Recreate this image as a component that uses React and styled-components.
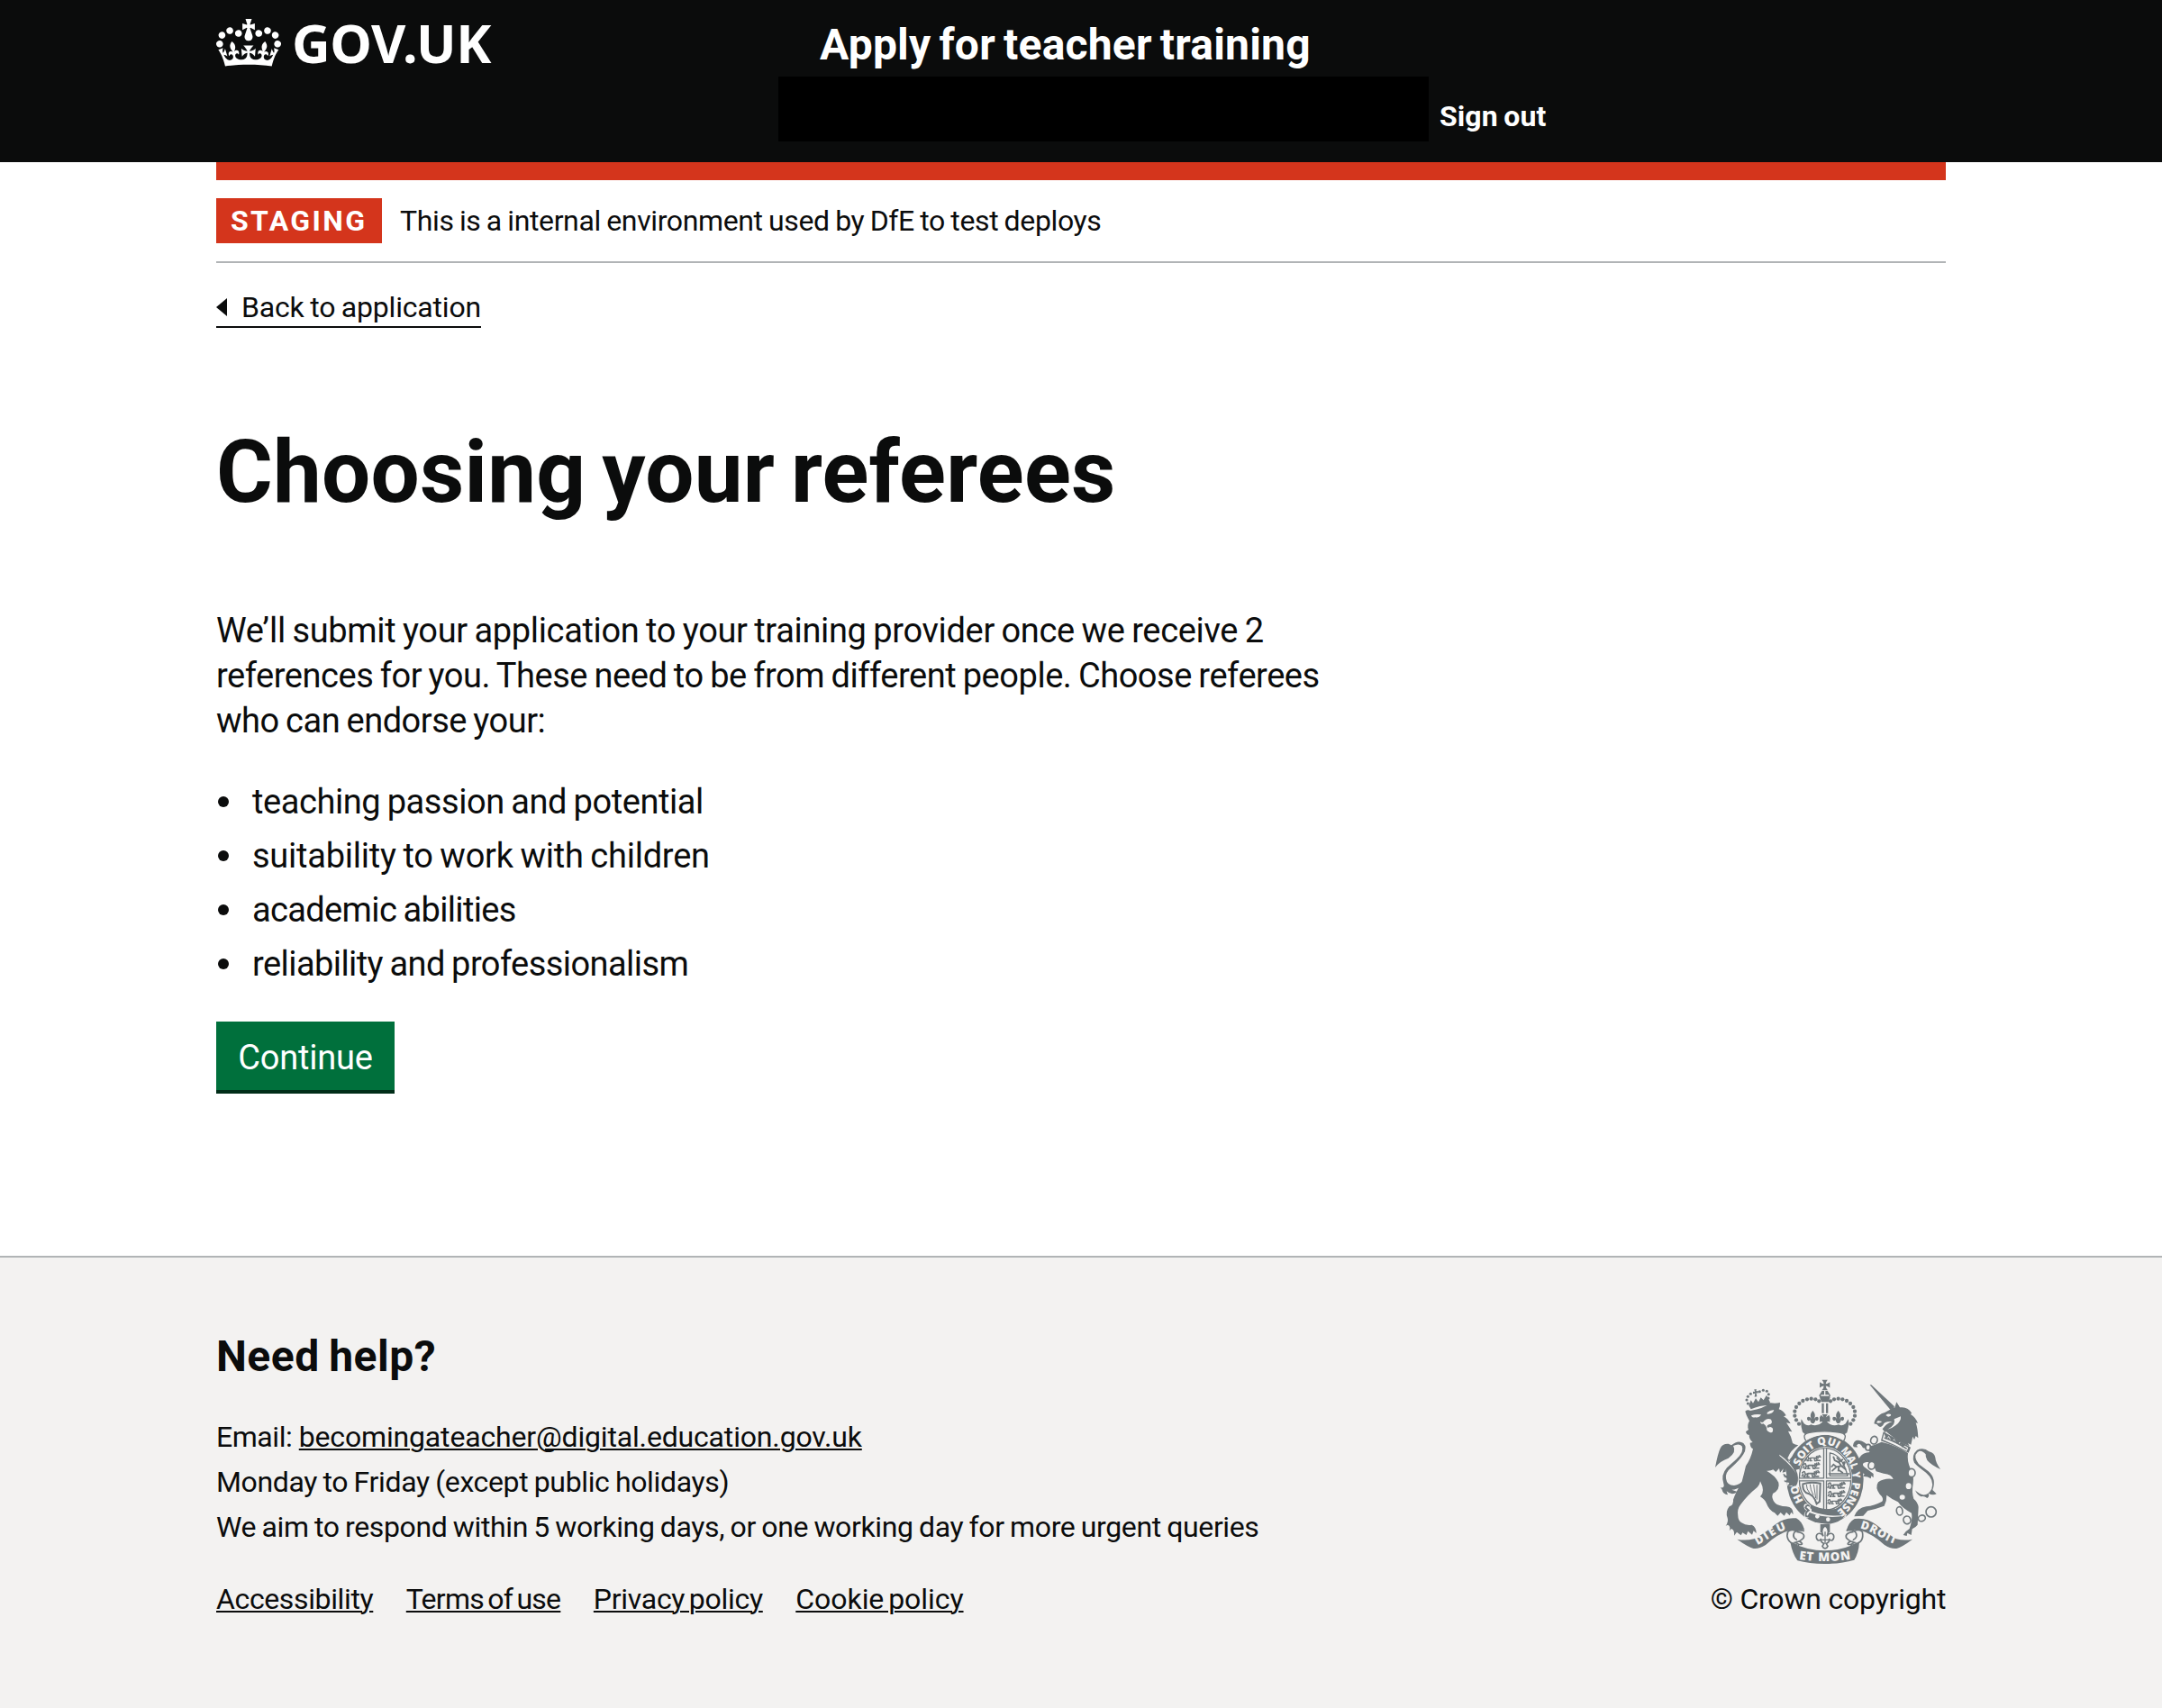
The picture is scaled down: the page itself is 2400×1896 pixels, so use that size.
import React from "react";
import styled, { createGlobalStyle } from "styled-components";

const INK = "#0b0c0c";
const RED = "#d4351c";
const RULE = "#b1b4b6";
const PALE = "#f3f2f1";
const CREST = "#6f777b";

const GlobalStyle = createGlobalStyle`
  *, *::before, *::after { box-sizing: border-box; }
  body {
    margin: 0;
    background: #fff;
    color: ${INK};
    font-family: Roboto, "Liberation Sans", sans-serif;
    -webkit-font-smoothing: antialiased;
  }
`;

const Page = styled.div`
  display: flex;
  flex-direction: column;
  min-height: 1896px;
`;

const Container = styled.div`
  width: 1920px;
  margin: 0 auto;
`;

/* Text run with its own letter and word spacing */
const Run = styled.span`
  letter-spacing: ${(p) => p.$track || 0}px;
  word-spacing: ${(p) => p.$word || 0}px;
  white-space: nowrap;
`;

const Header = styled.header`
  background: ${INK};
  height: 180px;
`;

const HeaderInner = styled(Container)`
  display: flex;
`;

const LogoLink = styled.a`
  display: flex;
  align-items: flex-start;
  width: 624px;
  padding-top: 21px;
  color: #fff;
  text-decoration: none;
`;

const CrownIcon = styled.svg`
  display: block;
  width: 72px;
  height: 53px;
  fill: #fff;
`;

const LogoText = styled.span`
  margin: -4px 0 0 12px;
  font-family: "Noto Sans", "Open Sans", sans-serif;
  font-weight: 700;
  font-size: 59px;
  line-height: 60px;
  letter-spacing: -0.4px;
`;

const HeaderContent = styled.div`
  padding-top: 20px;
  color: #fff;
  font-weight: 700;
`;

const ServiceName = styled.div`
  padding-left: 46px;
  font-size: 48px;
  line-height: 60px;
`;

const AccountRow = styled.div`
  display: flex;
  gap: 12px;
  margin-top: 5px;
`;

const AccountName = styled.div`
  width: 722px;
  height: 72px;
  background: #000;
`;

const SignOut = styled.a`
  padding-top: 19px;
  color: #fff;
  font-size: 32px;
  line-height: 50px;
`;

const RedBar = styled.div`
  height: 20px;
  background: ${RED};
`;

const PhaseBanner = styled.div`
  display: flex;
  gap: 20px;
  padding: 20px 0;
  border-bottom: 2px solid ${RULE};
  font-size: 32px;
  line-height: 50px;
`;

const PhaseTag = styled.strong`
  width: 184px;
  padding-left: 16px;
  background: ${RED};
  color: #fff;
  font-weight: 700;
`;

const BackLink = styled.a`
  display: flex;
  align-items: center;
  gap: 16px;
  width: 294px;
  margin-top: 29px;
  padding-bottom: 1px;
  border-bottom: 2px solid ${INK};
  font-size: 32px;
  line-height: 40px;
`;

const BackArrow = styled.span`
  border: solid transparent;
  border-width: 10px 12px 10px 0;
  border-right-color: ${INK};
`;

const Main = styled.main`
  padding: 110px 0 180px;
`;

const Title = styled.h1`
  margin: 0;
  font-size: 96px;
  line-height: 100px;
  font-weight: 700;
`;

const Lead = styled.p`
  display: flex;
  flex-direction: column;
  margin: 101px 0 40px;
  font-size: 38px;
  line-height: 50px;
`;

const List = styled.ul`
  display: flex;
  flex-direction: column;
  gap: 10px;
  margin: 0 0 39px;
  padding: 0;
  list-style: none;
  font-size: 38px;
  line-height: 50px;
`;

const Item = styled.li`
  display: flex;
  align-items: center;
  gap: 26px;
  padding-left: 2px;
  &::before {
    content: "";
    width: 12px;
    height: 12px;
    border-radius: 50%;
    background: ${INK};
  }
`;

const Button = styled.button`
  display: block;
  width: 198px;
  height: 76px;
  padding: 21px 0 17px;
  border: 0;
  background: #00703c;
  box-shadow: 0 4px 0 #002d18;
  color: #fff;
  font: 400 38px/38px Roboto, "Liberation Sans", sans-serif;
  text-align: center;
  margin-bottom: 4px;
`;

const Footer = styled.footer`
  flex: 1;
  border-top: 2px solid ${RULE};
  background: ${PALE};
`;

const FooterInner = styled(Container)`
  display: flex;
  justify-content: space-between;
  align-items: flex-end;
  padding-top: 80px;
`;

const HelpTitle = styled.h2`
  margin: 0 0 34px;
  font-size: 48px;
  line-height: 60px;
  font-weight: 700;
`;

const HelpLines = styled.div`
  display: flex;
  flex-direction: column;
  font-size: 32px;
  line-height: 50px;
`;

const TextLink = styled.a`
  color: ${INK};
  letter-spacing: ${(p) => p.$track || 0}px;
  word-spacing: -3px;
  text-decoration: underline;
  text-decoration-thickness: 2px;
  text-underline-offset: 2px;
  white-space: nowrap;
`;

const FooterLinks = styled.nav`
  display: flex;
  gap: 36.5px;
  margin-top: 30px;
  font-size: 32px;
  line-height: 50px;
`;

const Copyright = styled.div`
  display: flex;
  flex-direction: column;
  align-items: center;
  width: 261px;
  font-size: 32px;
  line-height: 50px;
`;

const CrestArt = styled.svg`
  display: block;
  width: 252px;
  height: 206px;
  margin: 0 1px 13px 0;
`;

function Crown() {
  return (
    <CrownIcon viewBox="0 0 132 97" preserveAspectRatio="none" aria-hidden="true">
      <path d="M25 30.2c3.5 1.5 7.7-.2 9.1-3.7 1.5-3.6-.2-7.8-3.9-9.2-3.6-1.4-7.6.3-9.1 3.9-1.4 3.5.3 7.5 3.9 9zM9 39.5c3.6 1.5 7.8-.2 9.2-3.7 1.5-3.6-.2-7.8-3.9-9.1-3.6-1.5-7.6.2-9.1 3.8-1.4 3.5.3 7.5 3.8 9zM4.4 57.2c3.5 1.5 7.7-.2 9.1-3.8 1.5-3.6-.2-7.7-3.9-9.1-3.5-1.5-7.6.3-9.1 3.8-1.4 3.5.3 7.6 3.9 9.1zm38.3-21.4c3.5 1.5 7.7-.2 9.1-3.8 1.5-3.6-.2-7.7-3.9-9.1-3.6-1.5-7.6.3-9.1 3.8-1.3 3.6.4 7.7 3.9 9.1zm64.4-5.6c-3.6 1.5-7.8-.2-9.1-3.7-1.5-3.6.2-7.8 3.8-9.2 3.6-1.4 7.7.3 9.2 3.9 1.3 3.5-.4 7.5-3.9 9zm15.9 9.3c-3.6 1.5-7.7-.2-9.1-3.7-1.5-3.6.2-7.8 3.7-9.1 3.6-1.5 7.7.2 9.2 3.8 1.5 3.5-.3 7.5-3.8 9zm4.7 17.7c-3.6 1.5-7.8-.2-9.2-3.8-1.5-3.6.2-7.7 3.9-9.1 3.6-1.5 7.7.3 9.2 3.8 1.3 3.5-.4 7.6-3.9 9.1zM89.3 35.8c-3.6 1.5-7.8-.2-9.2-3.8-1.4-3.6.2-7.7 3.9-9.1 3.6-1.5 7.7.3 9.2 3.8 1.4 3.6-.3 7.7-3.9 9.1zM69.7 17.7l8.9 4.7V9.3l-8.9 2.8c-.2-.3-.5-.6-.9-.9L72.4 0H59.6l3.5 11.2c-.3.3-.6.5-.9.9l-8.8-2.8v13.1l8.8-4.7c.3.3.6.7.9.9l-5 15.4v.1c-.2.8-.4 1.6-.4 2.4 0 4.1 3.1 7.5 7 8.1h.2c.3 0 .7.1 1 .1.4 0 .7 0 1-.1h.2c4-.6 7.1-4.1 7.1-8.1 0-.8-.1-1.7-.4-2.4V34l-5.1-15.4c.4-.2.7-.6 1-.9zM66 92.8c16.9 0 32.8 1.1 47.1 3.2 4-16.9 8.9-26.7 14-33.5l-9.6-3.4c1 4.9 1.1 7.2 0 10.2-1.5-1.4-3-4.3-4.2-8.7L108.6 76c2.8-2 5-3.2 7.5-3.3-4.4 9.4-10 11.9-13.6 11.2-4.3-.8-6.3-4.6-5.6-7.9 1-4.7 5.7-5.9 8-.5 4.3-8.7-3-11.4-7.6-8.8 7.1-7.2 7.9-13.5 2.1-21.1-8 6.1-8.1 12.3-4.5 20.8-4.7-5.4-12.1-2.5-9.5 6.2 3.4-5.2 7.9-2 7.2 3.1-.6 4.3-6.4 7.8-13.5 7.2-10.3-.9-10.9-8-11.2-13.8 2.5-.5 7.1 1.8 11 7.3L80.2 60c-4.1 4.4-8 5.3-12.3 5.4 1.4-4.4 8-11.6 8-11.6H55.5s6.4 7.2 7.9 11.6c-4.2-.1-8-1-12.3-5.4l1.4 16.4c3.9-5.5 8.5-7.7 10.9-7.3-.3 5.8-.9 12.8-11.1 13.8-7.2.6-12.9-2.9-13.5-7.2-.7-5 3.8-8.3 7.1-3.1 2.7-8.7-4.6-11.6-9.4-6.2 3.7-8.5 3.6-14.7-4.6-20.8-5.8 7.6-5 13.9 2.2 21.1-4.7-2.6-11.9.1-7.7 8.8 2.3-5.5 7.1-4.2 8.1.5.7 3.3-1.3 7.1-5.7 7.9-3.5.7-9-1.8-13.5-11.2 2.5.1 4.7 1.3 7.5 3.3l-4.7-15.4c-1.2 4.4-2.7 7.2-4.3 8.7-1.1-3-.9-5.3 0-10.2l-9.5 3.4c5 6.9 9.9 16.7 14 33.5 14.8-2.1 30.8-3.2 47.7-3.2z" />
    </CrownIcon>
  );
}

const crownPearls = [
  [351, 212], [342, 199], [337, 185], [337, 170], [342, 156], [352, 144], [364, 135],
  [378, 130], [392, 128], [406, 130], [418, 136],
];
const helmPearls = [
  [181, 144], [177, 132], [181, 121], [190, 112], [220, 104], [232, 100], [244, 103], [250, 113], [249, 126],
];
const chainLinks = [
  [601, 266, 11, 13, 20], [581, 290, 8, 10, 10], [593, 350, 11, 13, 10], [726, 375, 12, 14, 0],
  [686, 502, 10, 14, -10], [711, 532, 12, 13, -20], [760, 526, 12, 10, -20], [791, 505, 17, 17, 0],
];
const garterWords = [
  ["HO", 88, 58],
  ["SOIT", 208, 84],
  ["QUI", 302, 68],
  ["MAL", 381, 74],
  ["Y", 463, 21],
  ["PENSE", 496, 114],
];

function Fleur({ x, y, s = 1 }) {
  return (
    <path
      transform={`translate(${x} ${y}) scale(${s})`}
      d="M0-20C9-10 9-2 4 8C10-2 20-2 19 8C18 14 12 15 9 11C9 18 5 18 4 22H-4C-5 18-9 18-9 11C-12 15-18 14-19 8C-20-2-10-2-4 8C-9-2-9-10 0-20Z"
    />
  );
}

function CrossPattee({ x, y, s = 1 }) {
  return (
    <path
      transform={`translate(${x} ${y}) scale(${s})`}
      d="M-9-16H9Q3-9 3-3Q9-3 16-9V9Q9 3 3 3Q3 9 9 16H-9Q-3 9-3 3Q-9 3-16 9V-9Q-9-3-3-3Q-3-9-9-16Z"
    />
  );
}

function SmallLion({ x, y, s = 1 }) {
  return (
    <path
      transform={`translate(${x} ${y}) scale(${s})`}
      fill="none"
      stroke={CREST}
      strokeWidth="4.5"
      strokeLinecap="round"
      strokeLinejoin="round"
      d="M-27-3Q-20-11-19-2Q-18 4-10-1H8M10-6V3M15-8V1M10-4H22M8 1L14 8H22M2 0L4 9H10M-10 0L-13 9H-7M-17 2L-23 9H-18M20-9L24-4M-25 2L-28 7"
    />
  );
}

function RoyalCrest() {
  return (
    <CrestArt viewBox="69 63 756 618" role="img" aria-label="Royal coat of arms">
      <defs>
        <path id="garter" d="M438 515A101 118 0 0 1 438 280A101 118 0 0 1 438 515" />
        <path id="scrollLeft" d="M211 616C243 602 272 573 317 560" />
        <path id="scrollRight" d="M552 559C594 566 631 600 674 614" />
        <path id="scrollMid" d="M350 663Q437 676 526 662" />
        <clipPath id="shield"><ellipse cx="438" cy="396" rx="86" ry="103" /></clipPath>
      </defs>

      {/* Lion */}
      <g fill={CREST}>
        {helmPearls.map(([x, y]) => <circle key={`${x}-${y}`} cx={x} cy={y} r="4.6" />)}
        <path d="M184 151L191 133L198 143L207 127L216 139L224 124L233 133L243 116L255 140L252 149Q220 150 191 163Z" />
        <path d="M202 97H210L208 103L215 102V110L209 108L211 121L203 122L205 110L198 112V104L204 105Z" />
        <path d="M172 170Q180 163 189 168Q234 161 256 142Q273 145 288 141Q289 152 284 163Q299 168 308 184L300 187Q315 195 323 211L309 208Q320 225 328 238L315 236Q325 252 330 276Q338 281 349 283Q323 300 313 326Q329 341 340 367Q347 386 347 407Q338 423 327 424L329 414Q320 421 311 417L318 407Q308 410 301 402L311 394Q301 392 298 377L308 382L311 370L296 374L299 361L288 374L285 360L274 372L265 364Q257 369 243 368Q271 383 283 407Q289 430 264 444Q258 459 271 475Q282 486 309 487Q333 488 332 514L325 506L320 517L309 506L302 518L290 507L280 518L270 508Q251 500 242 475Q238 465 222 454Q240 438 222 403Q219 420 205 429Q181 448 157 480Q144 496 148 518Q148 533 160 541Q174 551 194 548Q209 555 209 576L200 568L195 581L181 569L176 582L163 574L158 583L144 572L135 584Q137 565 126 561L119 568Q125 553 114 548L107 551Q117 539 113 525Q105 504 119 487Q134 482 132 464Q140 440 160 407Q168 379 174 352Q191 328 198 295Q188 290 188 275L197 273Q184 263 185 247L194 248Q176 252 174 238L183 231Q177 218 186 202L181 193Q176 184 172 170Z" />
        <path d="M72 357Q81 309 89 293Q96 277 116 278L126 283Q148 264 166 276Q180 290 166 313Q153 334 127 356Q104 374 108 394Q111 417 135 417Q155 414 167 398L158 419Q146 430 127 431L146 438Q127 452 110 436L114 448Q98 446 94 429L89 424Q105 426 100 411Q90 382 111 358L142 330Q170 304 161 286Q151 275 132 285Q145 306 116 326Q87 336 72 357Z" />
      </g>
      <g fill={PALE}>
        <path d="M192 184Q207 178 225 181Q218 193 205 190Q194 193 192 184ZM245 174Q257 164 268 166Q263 180 245 179Z" />
        <path d="M222 204Q230 211 236 201Q246 191 258 197Q266 211 251 214Q240 219 248 225Q257 218 264 227Q266 244 254 240Q241 235 244 225Q239 215 232 211Q223 215 222 204Z" />
      </g>

      {/* Garter and shield */}
      <ellipse cx="438" cy="396" rx="133" ry="152" fill={PALE} />
      <path d="M345 315Q329 312 313 341L325 331Z" fill={CREST} />
      <ellipse cx="438" cy="396" rx="128" ry="148" fill={CREST} />
      <path d="M309 374L351 362L351 424L313 418Z" fill={PALE} />
      <path d="M302 330Q340 348 346 378Q352 405 340 421L326 429L329 416L313 420L319 408L303 405L312 396L299 382L310 384Z" fill={CREST} />
      <path d="M286 314Q325 340 343 380Q328 352 286 318Z" fill={PALE} />
      <path d="M392 483Q379 474 369 480Q363 493 376 501Q364 510 370 523Q382 531 389 519Q461 545 506 522L511 512Q466 527 393 503Z" fill={PALE} />
      <path d="M386 507Q444 530 506 517Q483 544 448 545Q412 543 379 521Z" fill={CREST} />
      <path d="M389 486Q376 478 373 491L383 500Q372 506 374 518Q384 525 388 511" fill="none" stroke={CREST} strokeWidth="6" />
      <circle cx="412" cy="520" r="7" fill={PALE} />
      <circle cx="448" cy="530" r="7" fill={PALE} />
      <g fill={PALE} fontFamily='"Open Sans", sans-serif' fontWeight="800" fontSize="36">
        {garterWords.map(([word, start, length]) => (
          <text key={word}>
            <textPath href="#garter" startOffset={start} textLength={length} lengthAdjust="spacingAndGlyphs">{word}</textPath>
          </text>
        ))}
      </g>
      <ellipse cx="438" cy="396" rx="90" ry="107" fill={PALE} />
      <ellipse cx="438" cy="396" rx="86" ry="103" fill="none" stroke={CREST} strokeWidth="4" />
      <g clipPath="url(#shield)">
        <path d="M438 290V500M345 397H530" stroke={CREST} strokeWidth="13" />
        <path d="M438 290V500M345 397H530" stroke={PALE} strokeWidth="5" />
        <SmallLion x={400} y={326} s={0.95} />
        <SmallLion x={394} y={351} s={1.05} />
        <SmallLion x={392} y={378} s={1.1} />
        <SmallLion x={478} y={416} s={1.1} />
        <SmallLion x={478} y={444} s={1.05} />
        <SmallLion x={472} y={470} s={0.9} />
        <path d="M454 385V309Q495 314 513 385ZM449 378H520" fill="none" stroke={CREST} strokeWidth="4" />
        <path d="M462 368L476 355L466 347L460 354M476 355L492 352L506 363M492 352L484 340L470 333L466 322M484 340L496 331M478 325L486 334M484 366L496 374M484 354L482 368M499 350Q509 334 498 342" fill="none" stroke={CREST} strokeWidth="5.5" strokeLinecap="round" />
        <path d="M364 412Q388 403 422 410L420 470L410 478Q400 446 376 442Q362 432 364 412Z" fill="none" stroke={CREST} strokeWidth="6" />
        <path d="M376 414Q376 430 386 441M388 413Q389 432 399 449M400 413L407 459M411 415V464" fill="none" stroke={CREST} strokeWidth="3" />
      </g>
      <path d="M391 481Q429 501 479 494L468 506Q424 511 388 493Z" fill={CREST} />

      {/* Unicorn */}
      <g fill={CREST}>
        <path d="M587 82L592 82L669 154L655 164Q620 123 587 82Z" />
        <path d="M652 166L666 153L669 160L676 139L687 157Q714 153 727 177L722 179Q741 191 747 210L740 208Q747 228 748 259L740 252L735 265L730 254L724 281L714 276L719 286Q684 273 649 244L640 236L639 242L629 229Q642 210 662 204Q634 202 631 216Q620 229 611 214L601 211Q604 190 626 178Q639 174 652 166Z" />
        <path d="M626 272Q671 282 714 309Q710 335 723 363Q735 381 731 411Q726 438 733 461Q747 473 749 489L746 548Q739 557 728 562L725 582L712 575L710 585L698 582Q708 567 719 561Q730 529 726 509Q694 492 681 472Q658 461 643 449Q644 466 635 485Q608 495 580 501L565 518L535 520Q545 492 575 487Q602 484 628 470Q635 459 620 446Q603 424 615 406Q637 391 665 396Q661 380 633 377L608 370Q597 336 576 339Q557 342 567 354L599 378V391L592 385L590 394Q579 386 565 387L569 379Q549 370 547 354Q544 333 555 321Q564 307 587 306Q580 294 564 292Q552 270 543 284L547 289Q532 292 531 284Q534 264 552 267Q570 270 583 287Q607 281 626 272Z" />
        <path d="M738 433Q772 466 793 428Q803 399 774 374Q744 352 735 341Q724 317 744 299Q766 288 784 304Q803 309 805 324Q806 340 822 363Q812 359 795 348Q771 333 773 313Q758 296 746 306Q730 320 750 346L782 370Q810 395 796 432L809 445Q796 451 782 443Q787 452 778 459Q768 451 758 454Q745 449 738 433Z" />
      </g>
      <path d="M632 238Q680 264 723 290L716 308Q670 284 624 268Z" fill={CREST} />
      <path d="M635 244L641 263L650 252L661 270L668 262L678 279L688 272L694 290L703 284L715 291L710 302Q668 280 629 264Z" fill={PALE} />
      <path d="M635 258Q674 271 710 295M649 265L650 257M667 273L669 266M687 282L690 275" fill="none" stroke={CREST} strokeWidth="5" />
      <path d="M640 183Q648 176 657 180Q659 187 648 188ZM609 208Q620 211 628 204L614 201ZM668 196L690 187Q692 203 674 216Q661 227 646 230Q675 216 668 196Z" fill={PALE} />
      {chainLinks.map(([x, y, rx, ry, a]) => (
        <ellipse key={`${x}-${y}`} cx={x} cy={y} rx={rx} ry={ry} transform={`rotate(${a} ${x} ${y})`} fill={PALE} stroke={CREST} strokeWidth="5" />
      ))}
      <ellipse cx="716" cy="419" rx="9" ry="10" fill={PALE} />
      <ellipse cx="695" cy="456" rx="9" ry="8" fill={PALE} />

      {/* Crown above the shield */}
      <g fill={CREST}>
        <CrossPattee x={437} y={82} s={1.05} />
        <path d="M428 101H446L456 117L453 124H421L418 117Z" />
        {crownPearls.map(([x, y]) => <circle key={`l${x}-${y}`} cx={x} cy={y} r="6.4" />)}
        {crownPearls.map(([x, y]) => <circle key={`r${x}-${y}`} cx={874 - x} cy={y} r="6.4" />)}
        <path d="M420 124Q437 119 455 124L449 139H426Z" />
        <path d="M427 143H434V176H427ZM441 143H448V176H441Z" />
        <path d="M359 196L368 211Q380 221 391 214Q413 222 430 205Q413 204 424 182L437 193L451 182Q460 204 444 205Q461 222 483 214Q494 221 506 211L515 196Q520 211 511 241L500 248Q437 230 374 248L363 239Q355 213 359 196Z" />
        <Fleur x={397} y={188} s={1} />
        <Fleur x={482} y={188} s={1} />
        <CrossPattee x={437} y={197} s={1.05} />
      </g>
      <path d="M424 117H451M437 102V116" stroke={PALE} strokeWidth="4" />
      <path d="M374 268Q360 245 385 241Q437 232 489 241Q514 245 500 268Q437 228 374 268Z" fill={PALE} />
      <path d="M374 268Q360 245 385 241Q437 232 489 241Q514 245 500 268" fill="none" stroke={CREST} strokeWidth="4" />

      {/* Motto scroll */}
      <g fill={CREST}>
        <path d="M145 596Q172 602 201 595Q240 574 270 548Q302 522 342 526Q360 535 369 563L354 568Q333 568 325 565Q279 578 240 615Q218 629 200 627Q180 621 145 596Z" />
        <path d="M729 596Q702 602 675 595Q640 574 610 549Q576 522 536 528Q518 537 509 566L522 569Q540 565 552 565Q595 578 636 615Q656 629 676 627Q696 621 729 596Z" />
        <path d="M322 605Q380 634 437 634Q494 634 552 605Q550 642 535 665Q490 678 437 678Q384 678 346 667Q329 644 322 605Z" />
        <path d="M422 546H454V573H422Z" />
      </g>
      <g fill={PALE} stroke={CREST} strokeWidth="5">
        <path d="M369 568C357 565 341 566 335 574C327 591 340 596 354 604Q375 617 337 612C314 607 308 587 314 571Q325 560 343 570" />
        <path d="M509 568C519 563 536 566 541 575C548 591 535 597 521 604Q500 617 538 612C560 607 566 590 562 571Q552 560 533 570" />
        <path d="M343 571Q374 575 366 592Q357 603 338 607Q356 613 346 619" />
        <path d="M533 571Q502 575 509 592Q518 603 536 607Q519 613 528 619" />
      </g>
      <path d="M438 551C450 560 451 572 444 586C449 573 469 573 467 590C465 603 454 602 451 594C455 606 446 607 442 611L447 619C443 629 433 629 429 619L434 611C430 607 421 606 425 594C422 602 411 603 409 590C407 573 427 573 432 586C425 572 426 560 438 551Z" fill={PALE} stroke={CREST} strokeWidth="5" />
      <path d="M427 598H450M438 571V611" stroke={CREST} strokeWidth="4" />
      <g fill={PALE} fontFamily='"Open Sans", sans-serif' fontWeight="800" fontSize="38">
        <text><textPath href="#scrollLeft" startOffset="2" textLength="110">DIEU</textPath></text>
        <text><textPath href="#scrollRight" startOffset="2" textLength="128">DROIT</textPath></text>
        <text fontSize="40"><textPath href="#scrollMid" startOffset="1" textLength="173">ET MON</textPath></text>
      </g>
    </CrestArt>
  );
}

const leadLines = [
  ["We’ll submit your application to your training provider once we receive 2", -0.33],
  ["references for you. These need to be from different people. Choose referees", -0.46],
  ["who can endorse your:", -0.5],
];
const qualities = [
  ["teaching passion and potential", -0.43],
  ["suitability to work with children", -0.24],
  ["academic abilities", -0.64],
  ["reliability and professionalism", -0.57],
];
const footerLinks = [
  ["Accessibility", -0.37],
  ["Terms of use", -0.73],
  ["Privacy policy", -0.29],
  ["Cookie policy", -0.05],
];

export default function App() {
  return (
    <Page>
      <GlobalStyle />
      <Header>
        <HeaderInner>
          <LogoLink>
            <Crown />
            <LogoText>GOV.UK</LogoText>
          </LogoLink>
          <HeaderContent>
            <ServiceName><Run $track={0.2} $word={-3}>Apply for teacher training</Run></ServiceName>
            <AccountRow>
              <AccountName />
              <SignOut><Run $track={0.1} $word={-1.5}>Sign out</Run></SignOut>
            </AccountRow>
          </HeaderContent>
        </HeaderInner>
      </Header>
      <Container>
        <RedBar />
        <PhaseBanner>
          <PhaseTag><Run $track={2.4}>STAGING</Run></PhaseTag>
          <Run $track={-0.37} $word={-1.2}>This is a internal environment used by DfE to test deploys</Run>
        </PhaseBanner>
        <BackLink>
          <BackArrow />
          <Run $track={-0.18} $word={-1.2}>Back to application</Run>
        </BackLink>
        <Main>
          <Title><Run $track={0.27} $word={-6.3}>Choosing your referees</Run></Title>
          <Lead>
            {leadLines.map(([t, k]) => <Run key={t} $track={k} $word={-1.5}>{t}</Run>)}
          </Lead>
          <List>
            {qualities.map(([t, k]) => <Item key={t}><Run $track={k} $word={-1.5}>{t}</Run></Item>)}
          </List>
          <Button><Run $track={-0.2}>Continue</Run></Button>
        </Main>
      </Container>
      <Footer>
        <FooterInner>
          <div>
            <HelpTitle><Run $track={0.5} $word={-2}>Need help?</Run></HelpTitle>
            <HelpLines>
              <div>
                <Run $track={-0.45}>Email: </Run>
                <TextLink $track={-0.166}>becomingateacher@digital.education.gov.uk</TextLink>
              </div>
              <Run $track={-0.35} $word={-1.2}>Monday to Friday (except public holidays)</Run>
              <Run $track={-0.37} $word={-1.2}>We aim to respond within 5 working days, or one working day for more urgent queries</Run>
            </HelpLines>
            <FooterLinks>
              {footerLinks.map(([t, k]) => <TextLink key={t} $track={k}>{t}</TextLink>)}
            </FooterLinks>
          </div>
          <Copyright>
            <RoyalCrest />
            <Run $track={-0.2}>© Crown copyright</Run>
          </Copyright>
        </FooterInner>
      </Footer>
    </Page>
  );
}
